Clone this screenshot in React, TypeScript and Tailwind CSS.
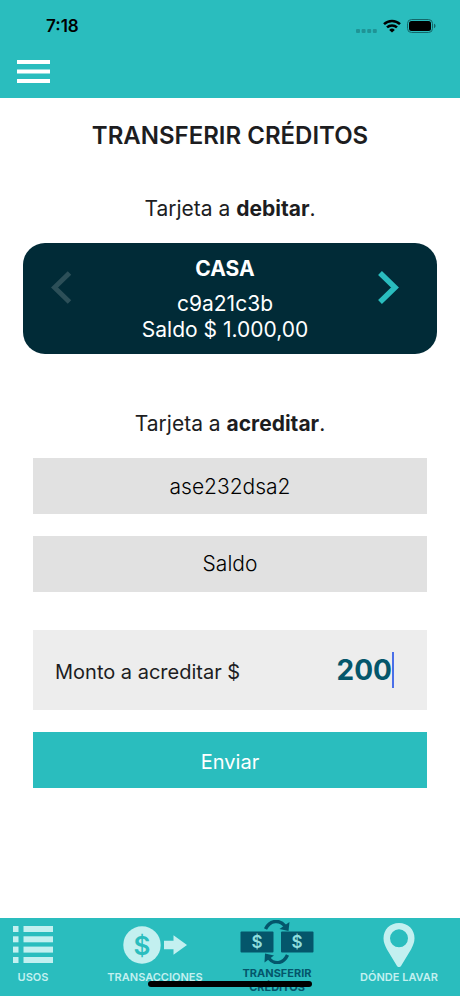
import React, { useState } from "react";

interface Card {
  name: string;
  code: string;
  balance: string;
}

const CARDS: Card[] = [{ name: "CASA", code: "c9a21c3b", balance: "1.000,00" }];

const StatusBar: React.FC = () => (
  <div className="flex h-[52px] items-center justify-between pl-[46px] pr-6 text-black">
    <span className="text-[17px] leading-6 font-semibold">7:18</span>
    <div className="flex items-center gap-[6px]">
      <svg width="21" height="13" viewBox="0 0 21 13" aria-hidden="true">
        <g fill="#1f9496">
          <rect x="0" y="9" width="4" height="4" rx="1" />
          <rect x="5.6" y="9" width="4" height="4" rx="1" />
          <rect x="11.2" y="9" width="4" height="4" rx="1" />
          <rect x="16.8" y="9" width="4" height="4" rx="1" />
        </g>
      </svg>
      <svg width="18" height="14" viewBox="0 0 18 14" aria-hidden="true">
        <g fill="none" stroke="#000" strokeWidth="2.5">
          <path d="M1 5.2a11.5 11.5 0 0 1 16 0" />
          <path d="M4 8.4a7.2 7.2 0 0 1 10 0" />
        </g>
        <path d="M9 13.6 6.2 10.9a4 4 0 0 1 5.6 0z" />
      </svg>
      <svg width="29" height="14" viewBox="0 0 29 14" aria-hidden="true">
        <rect x="0.5" y="0.5" width="25" height="13" rx="4" fill="none" stroke="#136769" />
        <rect x="2" y="2" width="22" height="10" rx="2.5" />
        <path d="M27 4.8c2 .6 2 3.8 0 4.4z" fill="#136769" />
      </svg>
    </div>
  </div>
);

const ListIcon = () => (
  <svg width="40" height="37" viewBox="0 0 40 37" fill="currentColor" aria-hidden="true">
    {[0, 10.3, 20.6, 31].map((y) => (
      <g key={y}>
        <rect x="0" y={y} width="5.5" height="6" />
        <rect x="10.5" y={y} width="29.5" height="6" />
      </g>
    ))}
  </svg>
);

const PaymentIcon = () => (
  <svg width="64" height="38" viewBox="0 0 64 38" aria-hidden="true">
    <circle cx="19" cy="19" r="18.7" fill="currentColor" />
    <text
      x="19"
      y="28.5"
      textAnchor="middle"
      fontSize="26"
      fontWeight="600"
      fill="#2abdbe"
    >
      $
    </text>
    <path d="M41 14.8h9.5V9.3L64 19 50.5 28.7V23.2H41z" fill="currentColor" />
  </svg>
);

const TransferIcon = () => (
  <svg width="74" height="44" viewBox="0 0 74 44" aria-hidden="true">
    <rect x="0.5" y="11.5" width="33" height="21" rx="1" fill="currentColor" />
    <rect x="41" y="11.5" width="32.5" height="21" rx="1" fill="currentColor" />
    <g fontSize="17" fontWeight="600" fill="#8fdede" textAnchor="middle">
      <text x="17" y="28">$</text>
      <text x="57" y="28">$</text>
    </g>
    <g fill="none" stroke="currentColor" strokeWidth="3.4">
      <path d="M25.500 9C30-.5 40-.5 45 6" />
      <path d="M47.500 35C43 44.500 34 44.500 29 38.500" />
    </g>
    <path d="M49.500 2 48.500 11 39.500 9z" fill="currentColor" />
    <path d="M25 33.500 34 35.500 24.500 42.500z" fill="currentColor" />
  </svg>
);

const PinIcon = () => (
  <svg width="32" height="44" viewBox="0 0 32 44" fill="currentColor" aria-hidden="true">
    <path
      fillRule="evenodd"
      d="M16 0C7 0 .5 6.5.5 15.2c0 4 1.4 7.2 3.5 11.3L14 43c1 1.400 3 1.400 4 0l10-16.500c2.100-4.100 3.500-7.300 3.500-11.300C31.500 6.500 25 0 16 0zm0 6.300a9 9 0 1 1 0 18 9 9 0 0 1 0-18z"
    />
  </svg>
);

const NAV_ITEMS = [
  { label: "USOS", Icon: ListIcon, active: false },
  { label: "TRANSACCIONES", Icon: PaymentIcon, active: false },
  { label: "TRANSFERIR CRÉDITOS", Icon: TransferIcon, active: true },
  { label: "DÓNDE LAVAR", Icon: PinIcon, active: false },
];

const BottomNav: React.FC = () => (
  <nav className="relative h-[78px] overflow-hidden bg-[#2abdbe]">
    <ul className="-ml-7 grid h-full grid-cols-4">
      {NAV_ITEMS.map(({ label, Icon, active }) => (
        <li key={label}>
          <a
            href="#"
            aria-current={active ? "page" : undefined}
            className={`flex flex-col items-center text-center ${
              active
                ? "text-[11px] font-bold text-[#04566b]"
                : "text-[11px] font-semibold text-[#c3f0f0]"
            }`}
          >
            <span
              className={`flex items-center justify-center ${
                active ? "h-12" : "h-[53px]"
              }`}
            >
              <Icon />
            </span>
            <span className={active ? "w-20 leading-[14px]" : "leading-3"}>
              {label}
            </span>
          </a>
        </li>
      ))}
    </ul>
    <div className="absolute bottom-[9px] left-1/2 h-[6px] w-[164px] -translate-x-1/2 rounded-full bg-black" />
  </nav>
);

const App: React.FC = () => {
  const [index, setIndex] = useState(0);
  const [target, setTarget] = useState("ase232dsa2");
  const [amount, setAmount] = useState("200");

  const card = CARDS[index];

  return (
    <div className="flex min-h-screen flex-col bg-white font-['Inter','Liberation_Sans',sans-serif] text-[#1d1d1f]">
      <header className="bg-[#2abdbe]">
        <StatusBar />
        <div className="flex h-[46px] items-start px-[17px] pt-2">
          <button type="button" aria-label="Menú">
            <svg width="33" height="23" viewBox="0 0 33 23" fill="#fff" aria-hidden="true">
              <rect y="0" width="33" height="4" />
              <rect y="9.5" width="33" height="4" />
              <rect y="19" width="33" height="4" />
            </svg>
          </button>
        </div>
      </header>

      <main className="flex-1">
        <h1 className="pt-[22px] text-center text-2xl leading-8 font-semibold">
          TRANSFERIR CRÉDITOS
        </h1>

        <p className="mt-[43px] text-center text-[21px] leading-7">
          Tarjeta a <strong>debitar</strong>.
        </p>

        <section className="mx-[23px] mt-5 flex h-[111px] items-center rounded-[22px] bg-[#012b37] pr-[38px] pl-7 text-white">
          <button
            type="button"
            aria-label="Tarjeta anterior"
            disabled={index === 0}
            onClick={() => setIndex(index - 1)}
            className="mb-[22px] text-[#2c4f58]"
          >
            <svg width="21" height="33" viewBox="0 0 21 33" fill="none" aria-hidden="true">
              <path d="M18.500 2 3.500 16.500l15 14.500" stroke="currentColor" strokeWidth="5" />
            </svg>
          </button>
          <div className="flex-1 text-center text-[21px] leading-[26px]">
            <h2 className="mb-[9px] pt-px font-bold">{card.name}</h2>
            <p>{card.code}</p>
            <p>Saldo $ {card.balance}</p>
          </div>
          <button
            type="button"
            aria-label="Tarjeta siguiente"
            onClick={() => setIndex((index + 1) % CARDS.length)}
            className="mb-[22px] text-[#2abdbe]"
          >
            <svg width="21" height="33" viewBox="0 0 21 33" fill="none" aria-hidden="true">
              <path d="m2 2 15 14.500L2 31" stroke="currentColor" strokeWidth="5.500" />
            </svg>
          </button>
        </section>

        <form className="mx-[33px] text-[21px]" onSubmit={(e) => e.preventDefault()}>
          <label htmlFor="target-card" className="mt-14 block text-center leading-7">
            Tarjeta a <strong>acreditar</strong>.
          </label>
          <input
            id="target-card"
            value={target}
            onChange={(e) => setTarget(e.target.value)}
            className="mt-5 block h-14 w-full bg-[#e1e1e1] text-center font-light text-black outline-none"
          />
          <button
            type="button"
            className="mt-[22px] block h-14 w-full bg-[#e1e1e1] font-light text-black"
          >
            Saldo
          </button>

          <div className="mt-[38px] flex h-20 items-center bg-[#ededed] pr-[33px] pl-[22px]">
            <label htmlFor="amount" className="pt-1 text-xl whitespace-nowrap">
              Monto a acreditar $
            </label>
            <input
              id="amount"
              inputMode="decimal"
              value={amount}
              onChange={(e) => setAmount(e.target.value)}
              className="h-9 min-w-0 flex-1 text-right text-[28px] font-bold text-[#04566b] caret-transparent outline-none"
            />
            <span className="h-9 w-[2px] bg-[#4a6fe8]" />
          </div>

          <button
            type="submit"
            className="mt-[22px] block h-14 w-full bg-[#2abdbe] pt-1 text-xl text-white"
          >
            Enviar
          </button>
        </form>
      </main>

      <BottomNav />
    </div>
  );
};

export default App;
